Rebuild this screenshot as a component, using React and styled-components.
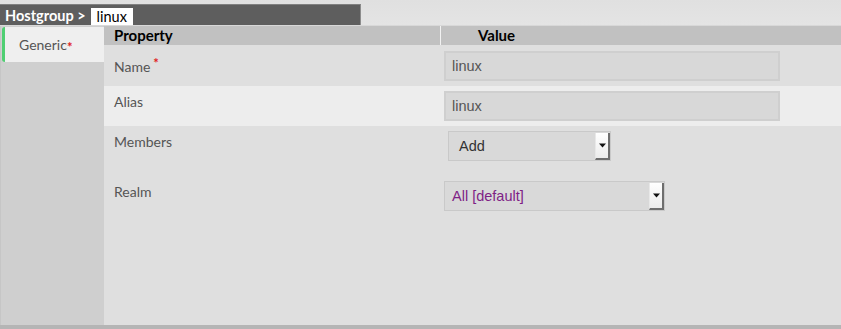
import React from "react";
import styled, { createGlobalStyle } from "styled-components";

const GlobalStyle = createGlobalStyle`
  html, body {
    margin: 0;
    padding: 0;
    background: #e3e3e3;
  }
  body {
    font-family: Lato, "Noto Sans", sans-serif;
  }
`;

const Page = styled.div`
  width: 841px;
  height: 329px;
  display: flex;
  flex-direction: column;
  background: linear-gradient(#e0e0e0, #e4e4e4 25px);
  overflow: hidden;
`;

const TopBar = styled.div`
  height: 25px;
  display: flex;
  align-items: flex-end;
`;

const Breadcrumb = styled.div`
  width: 361px;
  height: 21px;
  display: flex;
  align-items: center;
  gap: 5px;
  padding-left: 5px;
  box-sizing: border-box;
  background: #5e5e5e;
  border-top: 1px solid #808080;
  border-right: 1px solid #8c8c8c;
  color: #fff;
  font-size: 14.5px;
  font-weight: 700;
`;

const Crumb = styled.span`
  background: #fff;
  color: #000;
  font-size: 14.5px;
  font-weight: 400;
  height: 17px;
  line-height: 17px;
  padding: 0 6px 0 6px;
  margin-top: 2px;
`;

const Panel = styled.div`
  flex: 1;
  display: flex;
  border-bottom: 4px solid #b5b5b5;
  border-top: 1px solid #d8d8d8;
`;

const Sidebar = styled.div`
  width: 104px;
  background: #cfcfcf;
  border-left: 1px solid #c6c6c6;
  box-sizing: border-box;
  padding-top: 1px;
  padding-left: 1px;
`;

const Tab = styled.div`
  height: 35px;
  display: flex;
  align-items: center;
  padding-left: 14px;
  background: #efefef;
  border-left: 3px solid #4fcf72;
  border-radius: 3px 0 0 3px;
  color: #555;
  font-size: 14px;
`;

const Star = styled.sup`
  color: #e02020;
  font-size: 13px;
  font-weight: 700;
  margin-left: ${(p) => p.gap || "0px"};
  position: relative;
  top: 2px;
`;

const Content = styled.div`
  flex: 1;
  background: #dfdfdf;
  display: flex;
  flex-direction: column;
`;

const HeadRow = styled.div`
  height: 19px;
  display: flex;
  background: #c1c1c1;
  font-size: 15px;
  font-weight: 700;
  color: #000;
  margin-bottom: 1px;
`;

const HeadCell = styled.div`
  width: ${(p) => p.width || "auto"};
  flex: ${(p) => (p.width ? "none" : 1)};
  padding-left: ${(p) => p.pl || "10px"};
  line-height: 19px;
  box-sizing: border-box;
  border-right: ${(p) => (p.divider ? "1px solid #f2f2f2" : "none")};
`;

const Row = styled.div`
  height: ${(p) => p.height || "40px"};
  display: flex;
  background: ${(p) => (p.alt ? "#ededed" : "#dfdfdf")};
`;

const Label = styled.div`
  width: 337px;
  padding: ${(p) => p.pt || "7px"} 0 0 10px;
  box-sizing: border-box;
  color: #555;
  font-size: 14px;
  line-height: 17px;
`;

const Value = styled.div`
  flex: 1;
  padding: 5px 0 0 ${(p) => p.pl || "3px"};
`;

const TextBox = styled.div`
  width: 336px;
  height: 30px;
  box-sizing: border-box;
  background: #d8d8d8;
  border: 2px solid #cfcfcf;
  padding-left: 6px;
  line-height: 26px;
  font-family: "Liberation Sans", Arial, sans-serif;
  font-size: 14.5px;
  color: #555;
`;

const Select = styled.div`
  width: ${(p) => p.width};
  height: 30px;
  box-sizing: border-box;
  display: flex;
  background: #d9d9d9;
  border: 1px solid #c9c9c9;
  font-family: "Liberation Sans", Arial, sans-serif;
  font-size: 14.5px;
  color: ${(p) => p.color || "#333"};
`;

const SelectText = styled.div`
  flex: 1;
  padding-left: ${(p) => p.pl || "7px"};
  line-height: 29px;
`;

const SelectBtn = styled.div`
  width: 15px;
  height: 27px;
  margin-top: 1px;
  box-sizing: border-box;
  background: linear-gradient(#ffffff, #ececec);
  border-right: 2px solid #6e6e6e;
  border-bottom: 2px solid #6e6e6e;
  border-left: 1px solid #e8e8e8;
  display: flex;
  align-items: center;
  justify-content: center;
`;

const Arrow = () => (
  <svg width="7" height="5" viewBox="0 0 7 5">
    <path d="M0 0.5 H7 L3.5 4.5 Z" fill="#111" />
  </svg>
);

const App = () => {
  return (
    <Page>
      <GlobalStyle />
      <TopBar>
        <Breadcrumb>
          <span>Hostgroup &gt;</span>
          <Crumb>linux</Crumb>
        </Breadcrumb>
      </TopBar>
      <Panel>
        <Sidebar>
          <Tab>
            Generic<Star>*</Star>
          </Tab>
        </Sidebar>
        <Content>
          <HeadRow>
            <HeadCell width="337px" divider>
              Property
            </HeadCell>
            <HeadCell pl="37px">Value</HeadCell>
          </HeadRow>
          <Row>
            <Label>
              Name<Star gap="3px">*</Star>
            </Label>
            <Value>
              <TextBox>linux</TextBox>
            </Value>
          </Row>
          <Row alt>
            <Label>Alias</Label>
            <Value>
              <TextBox>linux</TextBox>
            </Value>
          </Row>
          <Row height="50px">
            <Label>Members</Label>
            <Value pl="7px">
              <Select width="163px">
                <SelectText pl="10px">Add</SelectText>
                <SelectBtn>
                  <Arrow />
                </SelectBtn>
              </Select>
            </Value>
          </Row>
          <Row>
            <Label>Realm</Label>
            <Value>
              <Select width="221px" color="#7f1f86">
                <SelectText>All [default]</SelectText>
                <SelectBtn>
                  <Arrow />
                </SelectBtn>
              </Select>
            </Value>
          </Row>
        </Content>
      </Panel>
    </Page>
  );
};

export default App;
